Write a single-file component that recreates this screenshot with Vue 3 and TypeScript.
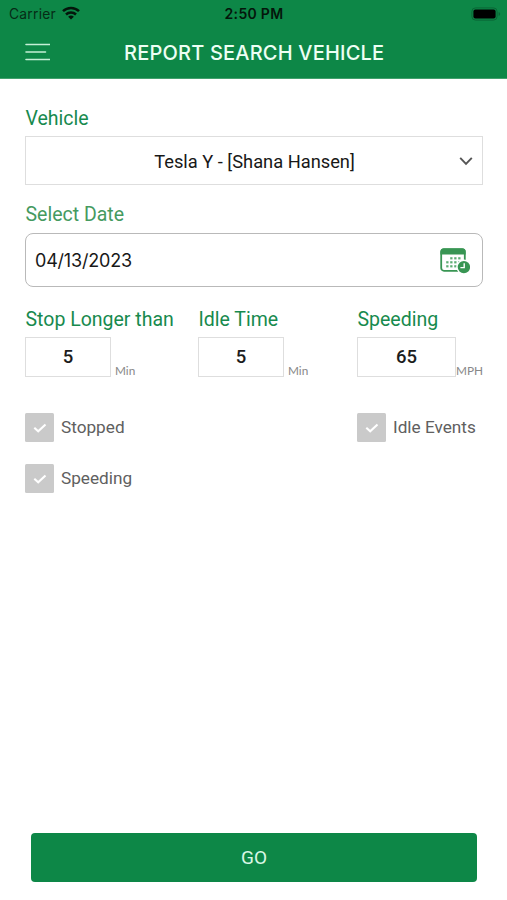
<script setup lang="ts">
import { ref } from 'vue'

interface Limit { label: string; value: number; unit: string; kind: string }
interface Filter { label: string; checked: boolean }

const vehicle = ref('Tesla Y - [Shana Hansen]')
const date = ref('04/13/2023')
const limits = ref<Limit[]>([
  { label: 'Stop Longer than', value: 5, unit: 'Min', kind: 'stop' },
  { label: 'Idle Time', value: 5, unit: 'Min', kind: 'idle' },
  { label: 'Speeding', value: 65, unit: 'MPH', kind: 'speed' },
])
const filters = ref<Filter[]>([
  { label: 'Stopped', checked: true },
  { label: 'Idle Events', checked: true },
  { label: 'Speeding', checked: true },
])
const dots = [
  [12, 10.5], [16, 10.5], [20, 10.5],
  [8, 14.5], [12, 14.5], [16, 14.5], [20, 14.5],
  [8, 18.5], [12, 18.5], [16, 18.5],
]
</script>

<template>
  <div class="screen">
    <header class="header">
      <div class="status">
        <div class="carrier">
          <span class="carrier-name">Carrier</span>
          <svg class="wifi" width="18" height="14" viewBox="0 0 18 14">
            <g fill="none" stroke="#04160b" stroke-width="2.5">
              <path d="M1 5.2a11.5 11.5 0 0 1 16 0" />
              <path d="M4 8.5a7.2 7.2 0 0 1 10 0" />
            </g>
            <path d="M9 13.6 6.1 10.8a4.2 4.2 0 0 1 5.8 0Z" fill="#04160b" />
          </svg>
        </div>
        <span class="clock">2:50 PM</span>
        <svg class="battery" width="30" height="14" viewBox="0 0 30 14">
          <rect x=".9" y=".9" width="25.2" height="12.2" rx="3.6" fill="none" stroke="#0a6636" stroke-width="1" />
          <rect x="2.4" y="2.4" width="22.2" height="9.2" rx="2" fill="#000" />
          <path d="M27.6 5v4q1.5-.6 1.5-2t-1.5-2Z" fill="#0a6636" />
        </svg>
      </div>
      <div class="navbar">
        <svg class="menu" width="25" height="18" viewBox="0 0 25 18">
          <path d="M1 1.5h23.5M1 9h19.5M1 16.5h23.5" fill="none" stroke="#c5efd6" stroke-width="1.6" stroke-linecap="round" />
        </svg>
        <h1 class="title">REPORT SEARCH VEHICLE</h1>
      </div>
    </header>

    <main class="form">
      <label class="label">Vehicle</label>
      <div class="select">
        <span class="select-text">{{ vehicle }}</span>
        <svg class="chevron" width="14" height="10" viewBox="0 0 14 10">
          <path d="m1.2 1.8 5.8 6 5.8-6" fill="none" stroke="#555" stroke-width="1.9" />
        </svg>
      </div>

      <label class="label date-label">Select Date</label>
      <div class="date">
        <span class="date-text">{{ date }}</span>
        <svg class="calendar" width="30" height="26" viewBox="0 0 30 26">
          <rect x="1.2" y="1.2" width="23.6" height="21.6" rx="2.8" fill="#fff" stroke="#389553" stroke-width="1.8" />
          <path d="M.4 6.5V3.4Q.4.4 3.4.4h19.2q3 0 3 3v3.1Z" fill="#389553" />
          <rect v-for="([x, y], i) in dots" :key="i" :x="x - 1.8" :y="y - 1.3" width="2.3" height="2.2" fill="#5fae75" />
          <circle cx="23.9" cy="19.1" r="7.5" fill="#fff" />
          <circle cx="23.9" cy="19.1" r="6.2" fill="#389553" />
          <path d="M24.2 15.3v4.3h-3.8" fill="none" stroke="#fff" stroke-width="1.4" />
        </svg>
      </div>

      <section class="limits">
        <div v-for="item in limits" :key="item.kind" class="limit" :class="item.kind">
          <label class="label limit-label">{{ item.label }}</label>
          <div class="limit-row">
            <div class="number">{{ item.value }}</div>
            <span class="unit">{{ item.unit }}</span>
          </div>
        </div>
      </section>

      <section class="filters">
        <div v-for="item in filters" :key="item.label" class="filter">
          <span class="box">
            <svg v-if="item.checked" width="14" height="10" viewBox="0 0 14 10">
              <path d="m1.3 4.8 3.9 3.5L12.5 1.4" fill="none" stroke="#fff" stroke-width="2.1" />
            </svg>
          </span>
          <span class="filter-text">{{ item.label }}</span>
        </div>
      </section>
    </main>

    <footer class="footer">
      <button class="go" type="button">GO</button>
    </footer>
  </div>
</template>

<style>
body { background: #fff; }
</style>

<style scoped>
.screen {
  display: flex;
  flex-direction: column;
  width: 507px;
  height: 900px;
  overflow: hidden;
  background: #fff;
  font-family: Roboto, sans-serif;
}
.screen * { box-sizing: border-box; }
.header {
  height: 79px;
  flex: none;
  background: #0d8747;
  border-bottom: 1px solid #41a16d;
}
.status {
  display: grid;
  grid-template-columns: 1fr auto 1fr;
  align-items: center;
  height: 27px;
  padding: 0 6px 0 9px;
  font-family: Inter, sans-serif;
  color: #04160b;
}
.carrier { display: flex; align-items: center; gap: 6px; }
.carrier-name { font-size: 13.8px; letter-spacing: 0.25px; color: #062b16; }
.wifi { margin-top: -2px; }
.clock { margin-left: -2px; font-size: 14px; font-weight: 600; letter-spacing: 0.3px; }
.battery { justify-self: end; }
.navbar {
  display: grid;
  grid-template-columns: 99px 1fr;
  align-items: center;
  height: 50px;
  padding-left: 25px;
}
.title {
  margin: 1px 0 0;
  font-family: Inter, sans-serif;
  font-size: 20px;
  font-weight: 500;
  line-height: 26px;
  letter-spacing: 0.2px;
  color: #edfff4;
  white-space: nowrap;
}
.form { flex: 1; padding: 27px 24px 0 25px; }
.label {
  display: block;
  height: 24px;
  padding-left: 0.5px;
  font-size: 19.5px;
  line-height: 25px;
  color: #178a4e;
  white-space: nowrap;
}
.limit-label { line-height: 24px; }
.select {
  display: grid;
  grid-template-columns: 1fr auto;
  align-items: center;
  height: 49px;
  margin-top: 6px;
  padding: 0 9px 0 24px;
  border: 1px solid #dedede;
}
.select-text { padding-top: 1px; text-align: center; font-size: 18.3px; color: #181818; }
.chevron { margin-top: 1px; }
.date-label { margin-top: 17px; color: #459a60; }
.date {
  display: flex;
  align-items: center;
  justify-content: space-between;
  height: 54px;
  margin-top: 7px;
  padding: 0 12px 0 9px;
  border: 1.5px solid #b9b9b9;
  border-radius: 8px;
}
.date-text { font-family: Inter, sans-serif; font-size: 18px; letter-spacing: -0.2px; color: #181818; }
.calendar { margin-top: 2px; }
.limits {
  display: grid;
  grid-template-columns: 173px 159px 126px;
  margin-top: 21px;
}
.limit-row { display: flex; align-items: flex-end; margin-top: 5px; }
.number {
  width: 86px;
  height: 40px;
  border: 1px solid #dedede;
  text-align: center;
  font-size: 18.5px;
  font-weight: 500;
  line-height: 39px;
  color: #1c1c1c;
}
.speed .number { width: 99px; }
.unit {
  margin-left: 4px;
  font-family: Lato, sans-serif;
  font-size: 11.8px;
  line-height: 13px;
  color: #888;
}
.speed .unit { margin-left: 0; }
.filters {
  display: grid;
  grid-template-columns: 332px 126px;
  row-gap: 22px;
  margin-top: 36px;
}
.filter { display: flex; align-items: center; gap: 7px; }
.box {
  display: flex;
  align-items: center;
  justify-content: center;
  width: 29px;
  height: 29px;
  border-radius: 1.5px;
  background: #cacaca;
}
.filter-text { margin-top: -1px; font-size: 17.2px; color: #606060; white-space: nowrap; }
.footer { flex: none; padding: 0 30px 18px 31px; }
.go {
  display: block;
  width: 100%;
  height: 49px;
  padding: 0;
  border: 0;
  border-radius: 4px;
  background: #0d8747;
  color: #d9f7e5;
  font-family: Roboto, sans-serif;
  font-size: 19px;
}
</style>
